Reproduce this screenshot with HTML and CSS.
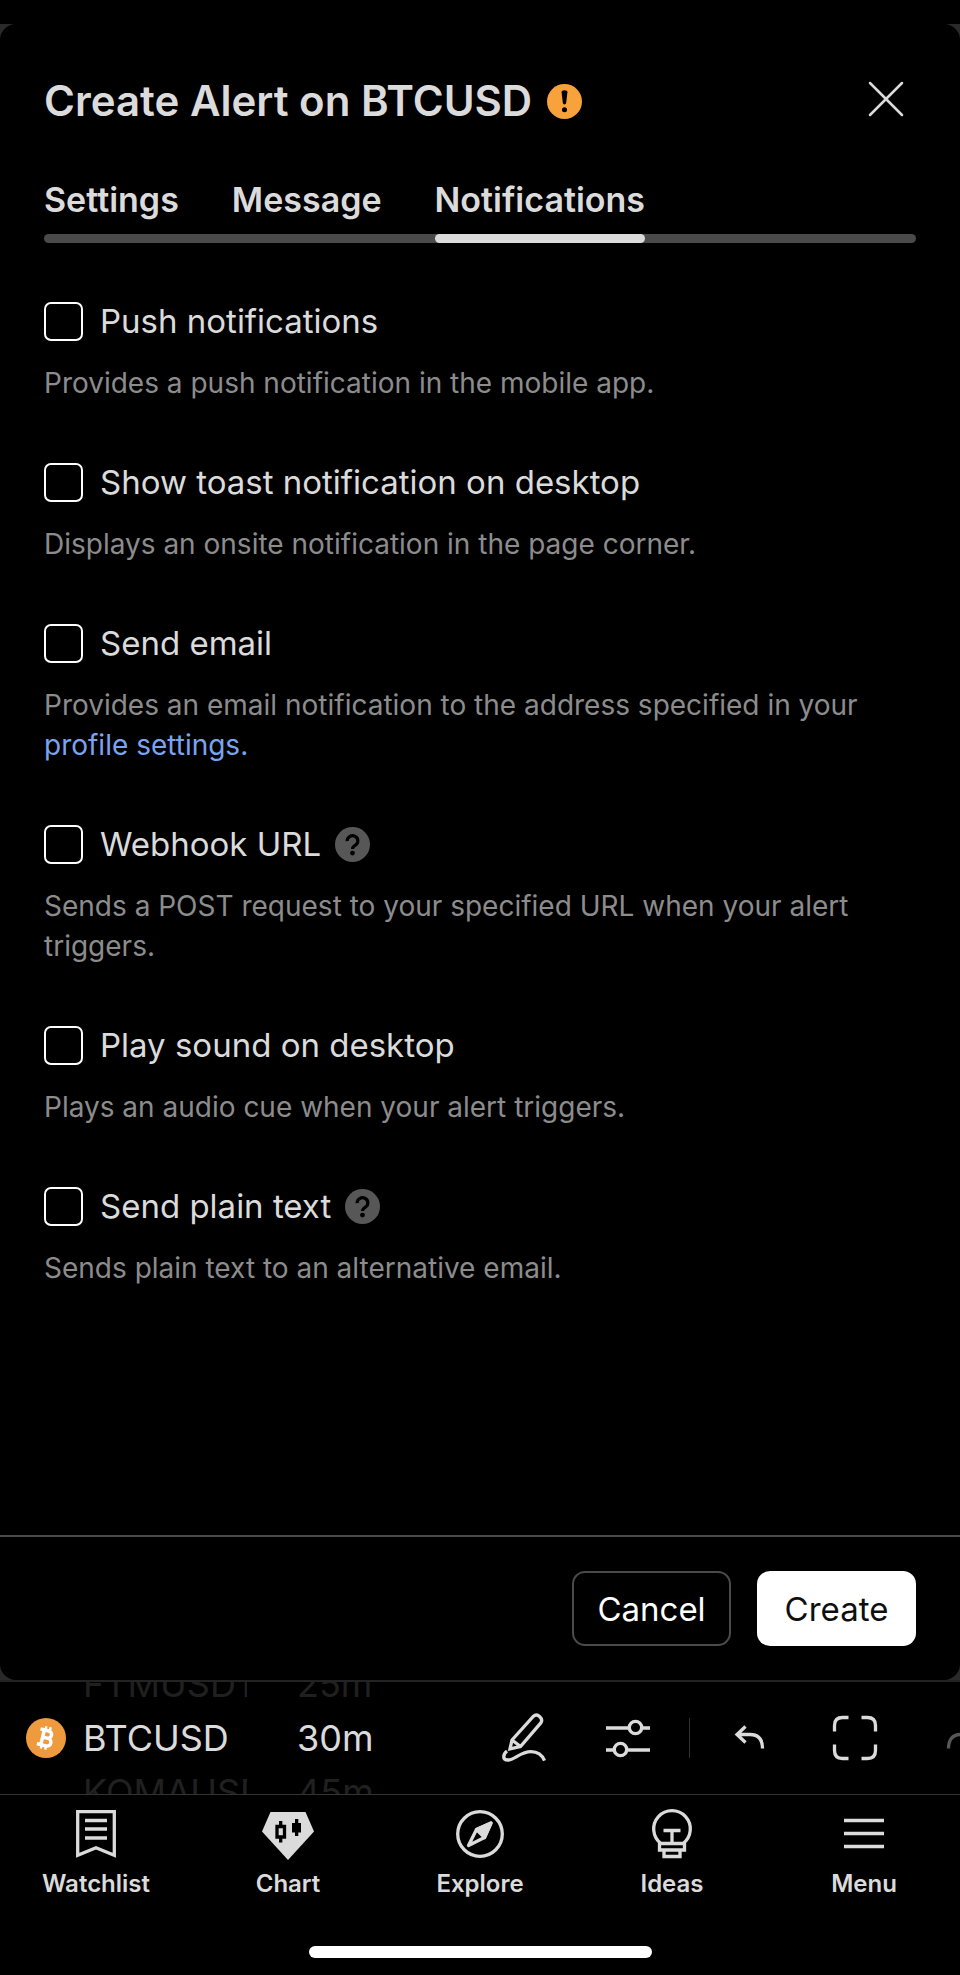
FILE: index.html
```
<!DOCTYPE html>
<html lang="en">
<head>
	<meta charset="UTF-8">
	<meta name="viewport" content="width=device-width, initial-scale=1">
	<title>Create Alert on BTCUSD</title>
	<link rel="stylesheet" href="styles.css">
</head>
<body>
	<div class="backdrop">
		<form class="sheet">
			<div class="header">
				<h1>Create Alert on BTCUSD</h1>
				<svg class="badge" viewBox="0 0 36 36">
					<circle cx="18" cy="18" r="18" fill="#f7a23b"/>
					<path d="M15 8.500q0-2 3-2t3 2l-1.300 11q-.3 1.500-1.700 1.500t-1.700-1.500z" fill="#000"/>
					<circle cx="18" cy="26.500" r="2.600" fill="#000"/>
				</svg>
				<button type="button" class="close" aria-label="Close">
					<svg width="36" height="36" viewBox="0 0 36 36">
						<path d="M2 2l32 32M34 2L2 34" stroke="#dbdbdb" stroke-width="2.500" stroke-linecap="round"/>
					</svg>
				</button>
			</div>
			<div class="tabs">
				<button type="button">Settings</button>
				<button type="button">Message</button>
				<button type="button" class="selected">Notifications</button>
			</div>
			<div class="options">
				<div class="option">
					<div class="row">
						<input type="checkbox" id="push">
						<label for="push">Push notifications</label>
					</div>
					<p>Provides a push notification in the mobile app.</p>
				</div>
				<div class="option">
					<div class="row">
						<input type="checkbox" id="toast">
						<label for="toast">Show toast notification on desktop</label>
					</div>
					<p>Displays an onsite notification in the page corner.</p>
				</div>
				<div class="option">
					<div class="row">
						<input type="checkbox" id="email">
						<label for="email">Send email</label>
					</div>
					<p>Provides an email notification to the address specified in your <a href="#">profile settings.</a></p>
				</div>
				<div class="option">
					<div class="row">
						<input type="checkbox" id="webhook">
						<label for="webhook">Webhook URL</label>
						<svg class="badge" viewBox="0 0 36 36">
							<circle cx="18" cy="18" r="18" fill="#575757"/>
							<path d="M12.500 14.500a5.500 5.300 0 1 1 8.500 4.200c-2 1.300-3 2-3 3.800" fill="none" stroke="#000" stroke-width="3.300"/>
							<circle cx="18" cy="26.800" r="2.500" fill="#000"/>
						</svg>
					</div>
					<p>Sends a POST request to your specified URL when your alert triggers.</p>
				</div>
				<div class="option">
					<div class="row">
						<input type="checkbox" id="sound">
						<label for="sound">Play sound on desktop</label>
					</div>
					<p>Plays an audio cue when your alert triggers.</p>
				</div>
				<div class="option">
					<div class="row">
						<input type="checkbox" id="plain">
						<label for="plain">Send plain text</label>
						<svg class="badge" viewBox="0 0 36 36">
							<circle cx="18" cy="18" r="18" fill="#575757"/>
							<path d="M12.500 14.500a5.500 5.300 0 1 1 8.500 4.200c-2 1.300-3 2-3 3.800" fill="none" stroke="#000" stroke-width="3.300"/>
							<circle cx="18" cy="26.800" r="2.500" fill="#000"/>
						</svg>
					</div>
					<p>Sends plain text to an alternative email.</p>
				</div>
			</div>
			<div class="footer">
				<button type="button" class="cancel">Cancel</button>
				<button type="button" class="create">Create</button>
			</div>
		</form>
	</div>
	<div class="toolbar">
		<svg class="coin" viewBox="0 0 40 40">
			<circle cx="20" cy="20" r="20" fill="#ee9a3d"/>
			<g transform="rotate(14 20 20)" fill="none" stroke="#fff" stroke-width="3.500">
				<path d="M12.500 12.500H21a3.700 3.700 0 0 1 0 7.400h-5M21 19.900h1a3.900 3.900 0 0 1 0 7.800h-9.500M16.500 12.500v15.200"/>
				<path d="M17.500 8.500v4M22 8.500v4M17.500 27.500v4M22 27.500v4" stroke-width="2.400"/>
			</g>
		</svg>
		<div class="wheel symbol">
			<span>FTMUSDT</span>
			<b>BTCUSD</b>
			<span>KOMAUSDT</span>
		</div>
		<div class="wheel interval">
			<span>25m</span>
			<b>30m</b>
			<span>45m</span>
		</div>
		<div class="tools">
			<button type="button" aria-label="Draw">
				<svg width="56" height="56" viewBox="0 0 56 56">
					<path d="M17 31L38.500 7.200q3-2.500 6.300.5t.8 6.500L25.500 37.500l-10.500 2.300zM17 31l8.500 6.500M12 42c-4 3-5 9 1 9 6.500 0 12.500-8.300 23-8.300 7 0 11 3 13.500 9" transform="translate(-1 -1)"/>
				</svg>
			</button>
			<button type="button" aria-label="Indicators">
				<svg width="56" height="56" viewBox="0 0 56 56">
					<path d="M6 18h22M42.500 18H50M6 40h7.500M27 40h23"/>
					<circle cx="35.500" cy="17.500" r="6.200"/>
					<circle cx="20.500" cy="39.500" r="6.200"/>
				</svg>
			</button>
			<i class="divider"></i>
			<button type="button" aria-label="Undo">
				<svg width="56" height="56" viewBox="0 0 56 56">
					<path d="M14 24.500h13q12.500 0 12.500 14M22.500 16.500l-8.500 8 8.500 8"/>
				</svg>
			</button>
			<button type="button" aria-label="Fullscreen">
				<svg width="56" height="56" viewBox="0 0 56 56">
					<path d="M21.500 7.500h-6q-8 0-8 8v6M34.500 7.500h6q8 0 8 8v6M48.500 34.500v6q0 8-8 8h-6M21.500 48.500h-6q-8 0-8-8v-6"/>
				</svg>
			</button>
			<button type="button" aria-label="Redo" class="faded">
				<svg width="56" height="56" viewBox="0 0 56 56">
					<path d="M43 24.500H30q-12.500 0-12.500 14M34.500 16.500l8.500 8-8.500 8"/>
				</svg>
			</button>
		</div>
	</div>
	<div class="nav">
		<a href="#">
			<svg width="56" height="54" viewBox="0 0 56 54">
				<path d="M9.700 3.700h36.600v43.500L28 39.800 9.700 47.200zM17 12.500h22M17 21h22M17 30h22"/>
			</svg>
			Watchlist
		</a>
		<a href="#">
			<svg width="56" height="54" viewBox="0 0 56 54">
				<path d="M10.500 4h35L54 23.500 28 52 2 23.500z" fill="#dbdbdb" stroke="none"/>
				<path d="M17 18.500h7.500V29H17zM20.700 13v4M20.700 30v4.500" stroke="#000"/>
				<path d="M32 15h9v9.500h-9zM35 11h3.300v17H35z" fill="#000" stroke="none"/>
			</svg>
			Chart
		</a>
		<a href="#">
			<svg width="56" height="54" viewBox="0 0 56 54">
				<circle cx="28" cy="26" r="22.300"/>
				<path d="M39 15L24.500 21.500 16.500 37.500 32.500 29.500z" stroke-linejoin="round"/>
				<path d="M39 15L24.500 21.500l8 8z" fill="#dbdbdb" stroke-linejoin="round"/>
			</svg>
			Explore
		</a>
		<a href="#">
			<svg width="56" height="54" viewBox="0 0 56 54">
				<path d="M17 35.500a18.300 18.300 0 1 1 22 0M15.500 35.500h25v6.500h-25zM20 42v6.500h16V42M19.500 22.500h17M28 22.500v13"/>
			</svg>
			Ideas
		</a>
		<a href="#">
			<svg width="56" height="54" viewBox="0 0 56 54">
				<path d="M8 12.500h40M8 25.500h40M8 38.500h40"/>
			</svg>
			Menu
		</a>
	</div>
	<div class="home"></div>
</body>
</html>
```
FILE: styles.css
```
*{
	margin: 0;
	padding: 0;
	box-sizing: border-box;
}
body{
	display: flex;
	flex-direction: column;
	min-height: 100vh;
	padding-top: 24px;
	background: #000;
	color: #dbdbdb;
	font-family: Inter, "Liberation Sans", sans-serif;
	font-size: 33px;
}
button{
	border: 0;
	background: none;
	color: inherit;
	font: inherit;
}
a{
	color: #7ba4f0;
	text-decoration: none;
}
svg{
	display: block;
	flex: none;
}
.backdrop{
	display: flex;
	flex: 1;
	background: #2a2a2a;
	border-bottom: 2px solid #232323;
}
.sheet{
	display: flex;
	flex: 1;
	flex-direction: column;
	border-radius: 16px;
	background: #000;
}
.header{
	display: flex;
	align-items: center;
	gap: 15px;
	padding: 50px 56px 0 44px;
}
.header h1{
	font-size: 42px;
	font-weight: 600;
	line-height: 54px;
}
.badge{
	width: 35px;
	height: 35px;
}
.close{
	margin-left: auto;
	padding-bottom: 4px;
}
.tabs{
	display: flex;
	gap: 53px;
	position: relative;
	margin: 48px 44px 0;
}
/* grey track under all tabs */
.tabs::before{
	content: "";
	position: absolute;
	right: 0;
	bottom: 0;
	left: 0;
	height: 9px;
	border-radius: 5px;
	background: #4a4a4a;
}
.tabs button{
	position: relative;
	font-size: 34px;
	font-weight: 600;
	line-height: 47px;
}
.tabs button::after{
	content: "";
	display: block;
	height: 9px;
	margin-top: 11px;
	border-radius: 5px;
}
.tabs .selected::after{
	background: #dbdbdb;
}
.options{
	display: flex;
	flex: 1;
	flex-direction: column;
	gap: 59px;
	padding: 58px 44px;
}
.row{
	display: flex;
	align-items: center;
	gap: 14px;
	height: 40px;
}
.row input{
	width: 39px;
	height: 39px;
	margin-right: 3px;
	border: 2px solid #fff;
	border-radius: 7px;
	appearance: none;
}
.option p{
	margin-top: 22px;
	color: #8c8c8c;
	font-size: 28px;
	line-height: 40px;
}
.footer{
	display: flex;
	justify-content: flex-end;
	gap: 26px;
	padding: 34px 44px;
	border-top: 2px solid #4a4a4a;
}
.footer button{
	min-width: 159px;
	height: 75px;
	border-radius: 13px;
}
.footer .cancel{
	border: 2px solid #4a4a4a;
	color: #fff;
}
.footer .create{
	background: #fff;
	color: #0f0f0f;
}
.toolbar{
	display: flex;
	align-items: center;
	height: 113px;
	padding-left: 26px;
	border-bottom: 1px solid #333;
}
.coin{
	width: 40px;
	height: 40px;
	margin-right: 17px;
}
.wheel{
	display: flex;
	flex: none;
	flex-direction: column;
	justify-content: center;
	height: 112px;
	overflow: hidden;
	font-size: 36px;
	line-height: 54px;
}
.wheel span{
	color: #202020;
}
.wheel b{
	font-weight: 400;
}
.symbol{
	width: 164px;
	margin-right: 50px;
}
.interval{
	width: 175px;
}
.tools{
	display: flex;
	flex: 1;
	align-items: center;
	overflow: hidden;
}
.tools button{
	display: flex;
	flex: none;
	justify-content: center;
	width: 104px;
}
.tools svg, .nav svg{
	fill: none;
	stroke: #dbdbdb;
	stroke-width: 3.3;
}
.tools .faded{
	opacity: .4;
}
.divider{
	flex: none;
	width: 1px;
	height: 40px;
	margin: 0 9px;
	background: #333;
}
.nav{
	display: flex;
	padding-top: 13px;
}
.nav a{
	display: flex;
	flex: 1;
	flex-direction: column;
	align-items: center;
	color: #dbdbdb;
	font-size: 24px;
	font-weight: 600;
	line-height: 44px;
}
.home{
	width: 36%;
	max-width: 343px;
	height: 12px;
	margin: 40px auto 17px;
	border-radius: 6px;
	background: #fff;
}
```
